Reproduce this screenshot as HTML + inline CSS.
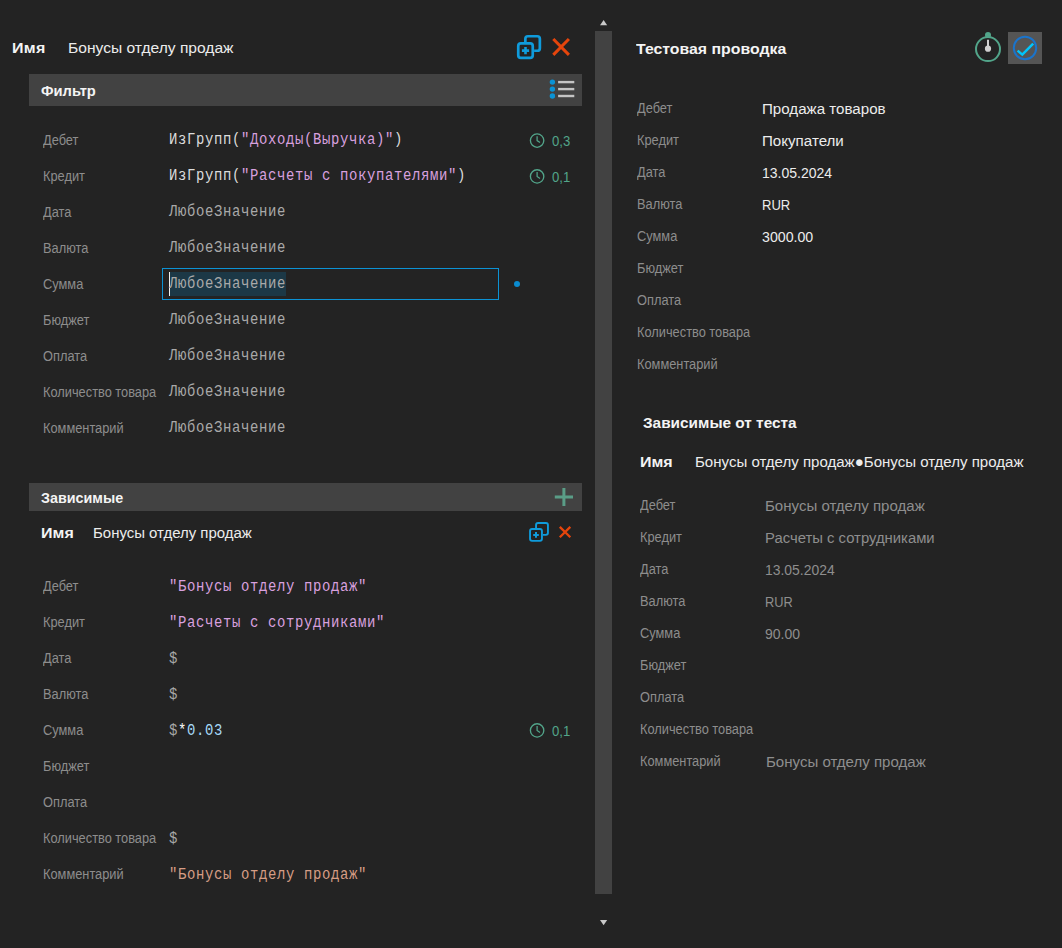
<!DOCTYPE html>
<html><head><meta charset="utf-8"><style>
html,body{margin:0;padding:0;}
body{width:1062px;height:948px;background:#232323;position:relative;overflow:hidden;font-family:"Liberation Sans",sans-serif;}
.t,.m,.b{position:absolute;white-space:pre;line-height:1;}
.t,.m{transform-origin:0 0;}
.t{font-family:"Liberation Sans",sans-serif;}
.m{font-family:"Liberation Mono",monospace;}
svg{position:absolute;left:0;top:0;}
</style></head><body>
<div class="b" style="left:29px;top:74px;width:553px;height:32px;background:#424242"></div>
<div class="b" style="left:162px;top:268px;width:337px;height:32px;box-sizing:border-box;border:1px solid #0c92d4"></div>
<div class="b" style="left:169px;top:272px;width:117px;height:24px;background:#1c3846"></div>
<div class="b" style="left:169px;top:272px;width:1px;height:24px;background:#f0f0f0"></div>
<div class="b" style="left:29px;top:483px;width:553px;height:28px;background:#424242"></div>
<div class="b" style="left:595px;top:31px;width:17px;height:863px;background:#424242"></div>
<div class="b" style="left:1008px;top:32px;width:34px;height:32px;background:#555555"></div>
<svg width="1062" height="948" viewBox="0 0 1062 948">
<rect x="518.25" y="43.35" width="14.5" height="14.5" rx="2.6" fill="none" stroke="#0f9bdb" stroke-width="2.7"/>
<path d="M525.35 42V38.85Q525.35 36.25 527.95 36.25H537.25Q539.85 36.25 539.85 38.85V48.14999999999999Q539.85 50.74999999999999 537.25 50.74999999999999H534.1" fill="none" stroke="#0f9bdb" stroke-width="2.7"/>
<path d="M521.9 50.6H529.1M525.5 47.0V54.2" stroke="#0f9bdb" stroke-width="2.6"/>
<path d="M553.3 39L568.9 54.9M568.9 39L553.3 54.9" stroke="#e5450c" stroke-width="3"/>
<circle cx="552.4" cy="82.1" r="2.7" fill="#0a93d5"/>
<path d="M558.1 82.1H574.3" stroke="#c4c4c4" stroke-width="2.4"/>
<circle cx="552.4" cy="89.1" r="2.7" fill="#0a93d5"/>
<path d="M558.1 89.1H574.3" stroke="#c4c4c4" stroke-width="2.4"/>
<circle cx="552.4" cy="96" r="2.7" fill="#0a93d5"/>
<path d="M558.1 96H574.3" stroke="#c4c4c4" stroke-width="2.4"/>
<circle cx="517" cy="284" r="3" fill="#0a8bcf"/>
<circle cx="537.1" cy="140.6" r="6.7" fill="none" stroke="#52a58a" stroke-width="1.35"/>
<path d="M537.1 136.29999999999998V140.6L540.0 142.6" fill="none" stroke="#52a58a" stroke-width="1.25"/>
<circle cx="537.1" cy="176.4" r="6.7" fill="none" stroke="#52a58a" stroke-width="1.35"/>
<path d="M537.1 172.1V176.4L540.0 178.4" fill="none" stroke="#52a58a" stroke-width="1.25"/>
<path d="M554.8 497H573M563.9 488V506" stroke="#5a9d87" stroke-width="3"/>
<rect x="530.0500000000001" y="528.95" width="11.9" height="11.9" rx="2" fill="none" stroke="#0f9bdb" stroke-width="1.9"/>
<path d="M536.0500000000001 528V524.95Q536.0500000000001 522.95 538.0500000000001 522.95H545.9499999999999Q547.9499999999999 522.95 547.9499999999999 524.95V532.8499999999999Q547.9499999999999 534.8499999999999 545.9499999999999 534.8499999999999H542.9" fill="none" stroke="#0f9bdb" stroke-width="1.9"/>
<path d="M533.2 534.9H538.8M536.0 532.1V537.6999999999999" stroke="#0f9bdb" stroke-width="2.0"/>
<path d="M559.8 526.9L570.3 537.3M570.3 526.9L559.8 537.3" stroke="#e5450c" stroke-width="2.3"/>
<circle cx="537.1" cy="730.4" r="6.7" fill="none" stroke="#52a58a" stroke-width="1.35"/>
<path d="M537.1 726.1V730.4L540.0 732.4" fill="none" stroke="#52a58a" stroke-width="1.25"/>
<path d="M600 25.2L603.6 20L607.2 25.2Z" fill="#c9c9c9"/>
<path d="M600 920L603.6 925.2L607.2 920Z" fill="#c9c9c9"/>
<circle cx="988" cy="35" r="3" fill="#52a58a"/>
<circle cx="988" cy="49.1" r="12" fill="#232323" stroke="#52a58a" stroke-width="2"/>
<path d="M988 39.8V48" stroke="#d0d0d0" stroke-width="2"/>
<circle cx="988" cy="48.7" r="3.1" fill="#d0d0d0"/>
<circle cx="1025" cy="48" r="11.2" fill="none" stroke="#1a74cc" stroke-width="2"/>
<path d="M1017.6 50.6L1022.3 54.6L1033.2 43.6" fill="none" stroke="#00c6fc" stroke-width="2.5"/>
</svg>
<div class="t" style="left:12.2px;top:40px;font-size:15.5px;color:#f4f4f4;font-weight:700;letter-spacing:0.3px;transform:scaleX(1.0323);">Имя</div>
<div class="t" style="left:68.2px;top:40px;font-size:15.5px;color:#ececec;transform:scaleX(1.006);">Бонусы отделу продаж</div>
<div class="t" style="left:41px;top:83px;font-size:15px;color:#f4f4f4;font-weight:700;transform:scaleX(0.98);">Фильтр</div>
<div class="t" style="left:43px;top:133px;font-size:14px;color:#8d8d8d;transform:scaleX(0.915);">Дебет</div>
<div class="t" style="left:43px;top:169px;font-size:14px;color:#8d8d8d;transform:scaleX(0.915);">Кредит</div>
<div class="t" style="left:43px;top:205px;font-size:14px;color:#8d8d8d;transform:scaleX(0.915);">Дата</div>
<div class="t" style="left:43px;top:241px;font-size:14px;color:#8d8d8d;transform:scaleX(0.915);">Валюта</div>
<div class="t" style="left:43px;top:277px;font-size:14px;color:#8d8d8d;transform:scaleX(0.915);">Сумма</div>
<div class="t" style="left:43px;top:313px;font-size:14px;color:#8d8d8d;transform:scaleX(0.915);">Бюджет</div>
<div class="t" style="left:43px;top:349px;font-size:14px;color:#8d8d8d;transform:scaleX(0.915);">Оплата</div>
<div class="t" style="left:43px;top:385px;font-size:14px;color:#8d8d8d;transform:scaleX(0.915);">Количество товара</div>
<div class="t" style="left:43px;top:421px;font-size:14px;color:#8d8d8d;transform:scaleX(0.915);">Комментарий</div>
<div class="m" style="left:168.9px;top:132px;font-size:16px;color:#dcdcdc;letter-spacing:0.7448px;transform:scaleX(0.87);">ИзГрупп(<span style="color:#d8a0df">"Доходы(Выручка)"</span>)</div>
<div class="m" style="left:168.9px;top:168px;font-size:16px;color:#dcdcdc;letter-spacing:0.7448px;transform:scaleX(0.87);">ИзГрупп(<span style="color:#d8a0df">"Расчеты с покупателями"</span>)</div>
<div class="m" style="left:168.9px;top:204px;font-size:16px;color:#a9a9a9;letter-spacing:0.7448px;transform:scaleX(0.87);">ЛюбоеЗначение</div>
<div class="m" style="left:168.9px;top:240px;font-size:16px;color:#a9a9a9;letter-spacing:0.7448px;transform:scaleX(0.87);">ЛюбоеЗначение</div>
<div class="m" style="left:168.9px;top:276px;font-size:16px;color:#a9a9a9;letter-spacing:0.7448px;transform:scaleX(0.87);">ЛюбоеЗначение</div>
<div class="m" style="left:168.9px;top:312px;font-size:16px;color:#a9a9a9;letter-spacing:0.7448px;transform:scaleX(0.87);">ЛюбоеЗначение</div>
<div class="m" style="left:168.9px;top:348px;font-size:16px;color:#a9a9a9;letter-spacing:0.7448px;transform:scaleX(0.87);">ЛюбоеЗначение</div>
<div class="m" style="left:168.9px;top:384px;font-size:16px;color:#a9a9a9;letter-spacing:0.7448px;transform:scaleX(0.87);">ЛюбоеЗначение</div>
<div class="m" style="left:168.9px;top:420px;font-size:16px;color:#a9a9a9;letter-spacing:0.7448px;transform:scaleX(0.87);">ЛюбоеЗначение</div>
<div class="t" style="left:552.2px;top:133px;font-size:15.5px;color:#52a58a;transform:scaleX(0.8465);">0,3</div>
<div class="t" style="left:552.2px;top:169px;font-size:15.5px;color:#52a58a;transform:scaleX(0.8465);">0,1</div>
<div class="t" style="left:40.8px;top:490px;font-size:15px;color:#f4f4f4;font-weight:700;transform:scaleX(0.955);">Зависимые</div>
<div class="t" style="left:40.8px;top:525px;font-size:15.5px;color:#f4f4f4;font-weight:700;letter-spacing:0.1px;transform:scaleX(1.0323);">Имя</div>
<div class="t" style="left:92.8px;top:525px;font-size:15.5px;color:#ececec;transform:scaleX(0.9652);">Бонусы отделу продаж</div>
<div class="t" style="left:43px;top:579px;font-size:14px;color:#8d8d8d;transform:scaleX(0.915);">Дебет</div>
<div class="t" style="left:43px;top:615px;font-size:14px;color:#8d8d8d;transform:scaleX(0.915);">Кредит</div>
<div class="t" style="left:43px;top:651px;font-size:14px;color:#8d8d8d;transform:scaleX(0.915);">Дата</div>
<div class="t" style="left:43px;top:687px;font-size:14px;color:#8d8d8d;transform:scaleX(0.915);">Валюта</div>
<div class="t" style="left:43px;top:723px;font-size:14px;color:#8d8d8d;transform:scaleX(0.915);">Сумма</div>
<div class="t" style="left:43px;top:759px;font-size:14px;color:#8d8d8d;transform:scaleX(0.915);">Бюджет</div>
<div class="t" style="left:43px;top:795px;font-size:14px;color:#8d8d8d;transform:scaleX(0.915);">Оплата</div>
<div class="t" style="left:43px;top:831px;font-size:14px;color:#8d8d8d;transform:scaleX(0.915);">Количество товара</div>
<div class="t" style="left:43px;top:867px;font-size:14px;color:#8d8d8d;transform:scaleX(0.915);">Комментарий</div>
<div class="m" style="left:169.4px;top:579px;font-size:16px;color:#dcdcdc;letter-spacing:0.7448px;transform:scaleX(0.87);"><span style="color:#d8a0df">"Бонусы отделу продаж"</span></div>
<div class="m" style="left:169.4px;top:615px;font-size:16px;color:#dcdcdc;letter-spacing:0.7448px;transform:scaleX(0.87);"><span style="color:#d8a0df">"Расчеты с сотрудниками"</span></div>
<div class="m" style="left:169.4px;top:651px;font-size:16px;color:#dcdcdc;letter-spacing:0.7448px;transform:scaleX(0.87);"><span style="color:#a8a8a8">$</span></div>
<div class="m" style="left:169.4px;top:687px;font-size:16px;color:#dcdcdc;letter-spacing:0.7448px;transform:scaleX(0.87);"><span style="color:#a8a8a8">$</span></div>
<div class="m" style="left:169.4px;top:723px;font-size:16px;color:#dcdcdc;letter-spacing:0.7448px;transform:scaleX(0.87);"><span style="color:#a8a8a8">$</span><span style="color:#fafafa">*</span><span style="color:#a6d9f7">0.03</span></div>
<div class="m" style="left:169.4px;top:831px;font-size:16px;color:#dcdcdc;letter-spacing:0.7448px;transform:scaleX(0.87);"><span style="color:#a8a8a8">$</span></div>
<div class="m" style="left:169.4px;top:867px;font-size:16px;color:#dcdcdc;letter-spacing:0.7448px;transform:scaleX(0.87);"><span style="color:#d69d85">"Бонусы отделу продаж"</span></div>
<div class="t" style="left:552.2px;top:723px;font-size:15.5px;color:#52a58a;transform:scaleX(0.8465);">0,1</div>
<div class="t" style="left:636.3px;top:41px;font-size:15.5px;color:#f4f4f4;font-weight:700;transform:scaleX(1.0219);">Тестовая проводка</div>
<div class="t" style="left:637px;top:101px;font-size:14px;color:#8d8d8d;transform:scaleX(0.915);">Дебет</div>
<div class="t" style="left:637px;top:133px;font-size:14px;color:#8d8d8d;transform:scaleX(0.915);">Кредит</div>
<div class="t" style="left:637px;top:165px;font-size:14px;color:#8d8d8d;transform:scaleX(0.915);">Дата</div>
<div class="t" style="left:637px;top:197px;font-size:14px;color:#8d8d8d;transform:scaleX(0.915);">Валюта</div>
<div class="t" style="left:637px;top:229px;font-size:14px;color:#8d8d8d;transform:scaleX(0.915);">Сумма</div>
<div class="t" style="left:637px;top:261px;font-size:14px;color:#8d8d8d;transform:scaleX(0.915);">Бюджет</div>
<div class="t" style="left:637px;top:293px;font-size:14px;color:#8d8d8d;transform:scaleX(0.915);">Оплата</div>
<div class="t" style="left:637px;top:325px;font-size:14px;color:#8d8d8d;transform:scaleX(0.915);">Количество товара</div>
<div class="t" style="left:637px;top:357px;font-size:14px;color:#8d8d8d;transform:scaleX(0.915);">Комментарий</div>
<div class="t" style="left:762.2px;top:101px;font-size:15.5px;color:#ececec;transform:scaleX(0.9755235);">Продажа товаров</div>
<div class="t" style="left:762.2px;top:133px;font-size:15.5px;color:#ececec;transform:scaleX(0.9755235);">Покупатели</div>
<div class="t" style="left:762.2px;top:165px;font-size:15.5px;color:#ececec;transform:scaleX(0.9032625);">13.05.2024</div>
<div class="t" style="left:762.2px;top:197px;font-size:15.5px;color:#ececec;transform:scaleX(0.8423567999999999);">RUR</div>
<div class="t" style="left:762.2px;top:229px;font-size:15.5px;color:#ececec;transform:scaleX(0.9146178);">3000.00</div>
<div class="t" style="left:643.2px;top:415px;font-size:15.5px;color:#f4f4f4;font-weight:700;transform:scaleX(0.991);">Зависимые от теста</div>
<div class="t" style="left:640.4px;top:454px;font-size:15.5px;color:#f4f4f4;font-weight:700;transform:scaleX(1.0323);">Имя</div>
<div class="t" style="left:694.9px;top:454px;font-size:15.5px;color:#ececec;transform:scaleX(0.9703);">Бонусы отделу продаж●Бонусы отделу продаж</div>
<div class="t" style="left:640px;top:498px;font-size:14px;color:#8d8d8d;transform:scaleX(0.915);">Дебет</div>
<div class="t" style="left:640px;top:530px;font-size:14px;color:#8d8d8d;transform:scaleX(0.915);">Кредит</div>
<div class="t" style="left:640px;top:562px;font-size:14px;color:#8d8d8d;transform:scaleX(0.915);">Дата</div>
<div class="t" style="left:640px;top:594px;font-size:14px;color:#8d8d8d;transform:scaleX(0.915);">Валюта</div>
<div class="t" style="left:640px;top:626px;font-size:14px;color:#8d8d8d;transform:scaleX(0.915);">Сумма</div>
<div class="t" style="left:640px;top:658px;font-size:14px;color:#8d8d8d;transform:scaleX(0.915);">Бюджет</div>
<div class="t" style="left:640px;top:690px;font-size:14px;color:#8d8d8d;transform:scaleX(0.915);">Оплата</div>
<div class="t" style="left:640px;top:722px;font-size:14px;color:#8d8d8d;transform:scaleX(0.915);">Количество товара</div>
<div class="t" style="left:640px;top:754px;font-size:14px;color:#8d8d8d;transform:scaleX(0.915);">Комментарий</div>
<div class="t" style="left:765.2px;top:498px;font-size:15.5px;color:#8e8e8e;transform:scaleX(0.970362);">Бонусы отделу продаж</div>
<div class="t" style="left:765.2px;top:530px;font-size:15.5px;color:#8e8e8e;transform:scaleX(0.9579744);">Расчеты с сотрудниками</div>
<div class="t" style="left:765.2px;top:562px;font-size:15.5px;color:#8e8e8e;transform:scaleX(0.898101);">13.05.2024</div>
<div class="t" style="left:765.2px;top:594px;font-size:15.5px;color:#8e8e8e;transform:scaleX(0.82584);">RUR</div>
<div class="t" style="left:765.2px;top:626px;font-size:15.5px;color:#8e8e8e;transform:scaleX(0.9032625);">90.00</div>
<div class="t" style="left:766.0px;top:754px;font-size:15.5px;color:#8e8e8e;transform:scaleX(0.970362);">Бонусы отделу продаж</div>
</body></html>
